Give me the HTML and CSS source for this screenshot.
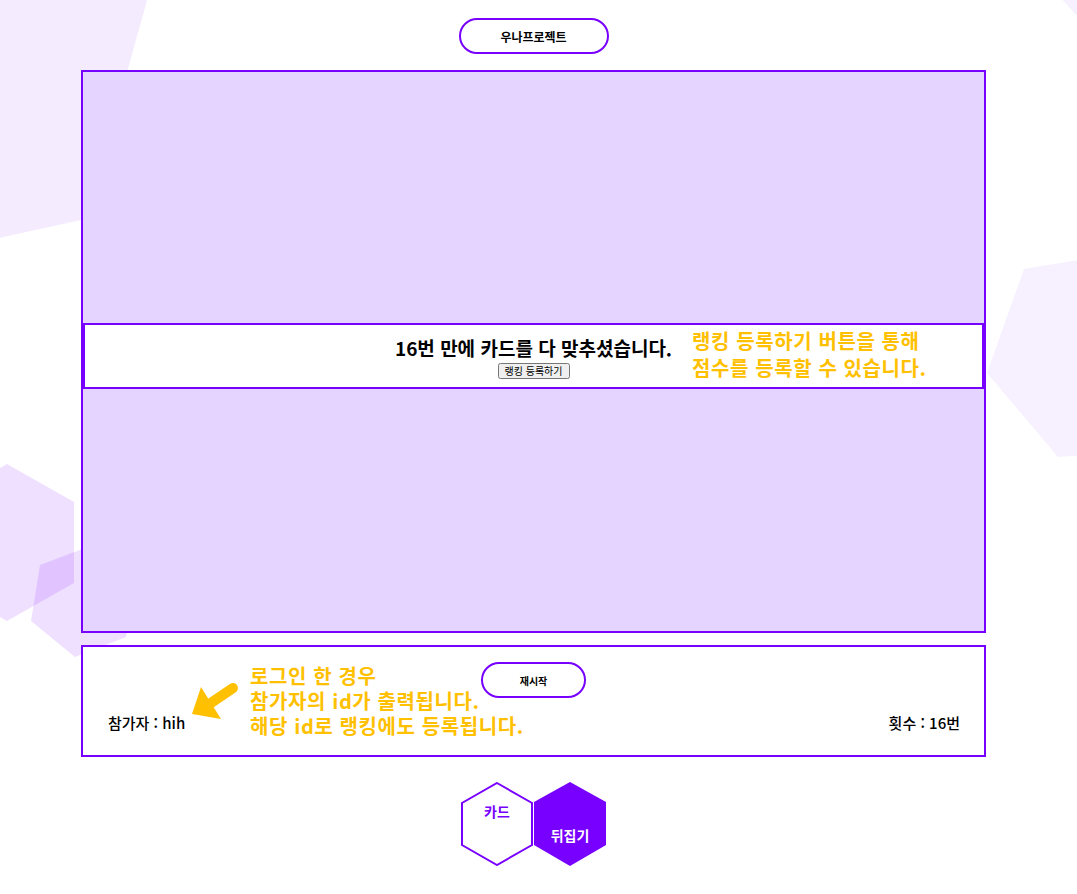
FILE: index.html
```html
<!DOCTYPE html>
<html lang="ko">
<head>
    <meta charset="UTF-8">
    <meta name="viewport" content="width=device-width, initial-scale=1.0">
    <title>카드 뒤집기</title>
    <link rel="stylesheet" href="styles.css">
</head>
<body>
    <svg class="bg-shapes" width="1077" height="894" viewBox="0 0 1077 894">
        <polygon class="shape-a" points="-20,-20 150,-10 86,219 -20,242"/>
        <polygon class="shape-b" points="1058,-5 1090,-5 1090,30"/>
        <polygon class="shape-b" points="1024,269 1090,258 1090,455 1058,457 987,373"/>
        <polygon class="shape-c" points="7,464 74,502 74,583 7,621 -60,583 -60,502"/>
        <polygon class="shape-c" points="40,565 93,545 137,581 126,637 75,657 31,621"/>
    </svg>

    <div class="page">
        <div class="top">
            <button class="pill-btn title-btn">우나프로젝트</button>
        </div>

        <div class="board">
            <div class="result-bar">
                <p class="result-text">16번 만에 카드를 다 맞추셨습니다.</p>
                <button class="rank-btn">랭킹 등록하기</button>
                <div class="note note-rank">랭킹 등록하기 버튼을 통해<br>점수를 등록할 수 있습니다.</div>
            </div>
        </div>

        <div class="status">
            <button class="pill-btn restart-btn">재시작</button>
            <div class="status-row">
                <span>참가자 : hih</span>
                <span>횟수 : 16번</span>
            </div>
            <div class="note note-login">로그인 한 경우<br>참가자의 id가 출력됩니다.<br>해당 id로 랭킹에도 등록됩니다.</div>
            <svg class="note-arrow" width="60" height="50" viewBox="0 0 60 50">
                <line x1="52" y1="18" x2="24" y2="37" stroke="#ffc000" stroke-width="10" stroke-linecap="round"/>
                <polygon points="20,17 11,44 40,49" fill="#ffc000"/>
            </svg>
        </div>

        <div class="logo">
            <div class="hex hex-outline">
                <svg width="72" height="84" viewBox="0 0 72 84">
                    <polygon points="36,1 71,21 71,63 36,83 1,63 1,21" fill="#fff" stroke="#7700ff" stroke-width="2"/>
                </svg>
                <span class="hex-label label-top">카드</span>
            </div>
            <div class="hex hex-fill">
                <svg width="72" height="84" viewBox="0 0 72 84">
                    <polygon points="36,0 72,20 72,63 36,84 0,63 0,20" fill="#7700ff"/>
                </svg>
                <span class="hex-label label-bottom">뒤집기</span>
            </div>
        </div>
    </div>
</body>
</html>
```

FILE: styles.css
```css
body {
    margin: 0;
    font-family: "Noto Sans CJK KR", "Noto Sans", sans-serif;
    color: #000;
    background: #fff;
}
.bg-shapes {
    position: absolute;
    left: 0;
    top: 0;
    z-index: 0;
}
.shape-a {
    fill: #7a00ff;
    opacity: 0.08;
}
.shape-b {
    fill: #7a00ff;
    opacity: 0.06;
}
.shape-c {
    fill: #7a00ff;
    opacity: 0.12;
}
.page {
    position: relative;
    z-index: 1;
    padding: 18px 10px 0 0;
}
.top {
    display: flex;
    justify-content: center;
}
.pill-btn {
    background: #fff;
    border: 2px solid #7700ff;
    border-radius: 18px;
    font-family: inherit;
    font-weight: bold;
    color: #000;
    padding: 0;
}
.title-btn {
    width: 150px;
    height: 36px;
    font-size: 12px;
}
.board {
    width: 901px;
    height: 559px;
    margin: 16px auto 0;
    border: 2px solid #7700ff;
    background: #e5d4ff;
    display: flex;
    align-items: center;
}
.result-bar {
    position: relative;
    flex: 1;
    height: 62px;
    margin-top: 8px;
    background: #fff;
    border: 2px solid #7700ff;
    display: flex;
    flex-direction: column;
    align-items: center;
}
.result-text {
    margin: 12px 0 0;
    font-size: 19px;
    font-weight: bold;
    line-height: 22px;
}
.rank-btn {
    margin-top: 4px;
    font-family: inherit;
    font-size: 10px;
    line-height: 12px;
    padding: 0 5px;
}
.note {
    position: absolute;
    color: #ffc000;
    font-size: 20px;
    font-weight: bold;
    letter-spacing: 0.6px;
    white-space: nowrap;
}
.note-rank {
    left: 607px;
    top: 2px;
    line-height: 27px;
}
.status {
    position: relative;
    width: 901px;
    height: 108px;
    margin: 12px auto 0;
    border: 2px solid #7700ff;
    background: #fff;
    display: flex;
    flex-direction: column;
    align-items: center;
}
.restart-btn {
    width: 105px;
    height: 36px;
    margin-top: 15px;
    font-size: 10px;
}
.status-row {
    align-self: stretch;
    display: flex;
    justify-content: space-between;
    padding: 0 24px 0 25px;
    margin-top: 14px;
    font-size: 15px;
    font-weight: 500;
}
.note-login {
    left: 167px;
    top: 16px;
    line-height: 25px;
}
.note-arrow {
    position: absolute;
    left: 98px;
    top: 23px;
}
.logo {
    display: flex;
    justify-content: center;
    gap: 1px;
    margin-top: 25px;
}
.hex {
    position: relative;
    width: 72px;
    height: 84px;
}
.hex svg {
    display: block;
}
.hex-label {
    position: absolute;
    left: 0;
    right: 0;
    text-align: center;
    font-size: 14px;
    font-weight: bold;
}
.label-top {
    top: 19px;
    color: #7700ff;
}
.label-bottom {
    top: 43px;
    color: #fff;
}
```
